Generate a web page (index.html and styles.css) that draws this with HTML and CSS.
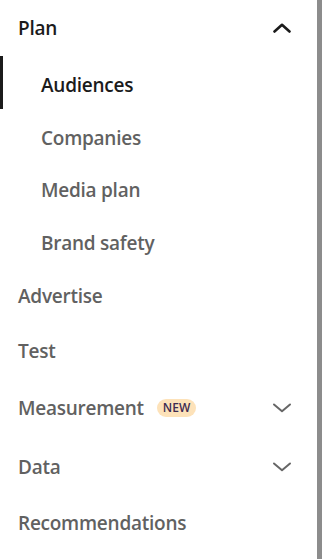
FILE: index.html
```html
<!DOCTYPE html>
<html lang="en">
<head>
  <meta charset="UTF-8" />
  <meta name="viewport" content="width=device-width, initial-scale=1.0" />
  <title>Navigation</title>
  <link rel="stylesheet" href="styles.css">
</head>
<body>
  <nav class="side-nav">
    <div class="nav-group">
      <div class="nav-item nav-parent open">
        <span class="nav-label">Plan</span>
        <svg class="chevron" width="20" height="10" viewBox="0 0 20 10">
          <path d="M2.5 8.5 L10 1.8 L17.5 8.5" />
        </svg>
      </div>
      <div class="sub-item active">Audiences</div>
      <div class="sub-item">Companies</div>
      <div class="sub-item">Media plan</div>
      <div class="sub-item">Brand safety</div>
    </div>

    <div class="nav-item">
      <span class="nav-label">Advertise</span>
    </div>
    <div class="nav-item">
      <span class="nav-label">Test</span>
    </div>
    <div class="nav-item nav-parent">
      <span class="nav-label">Measurement <span class="badge-new">NEW</span></span>
      <svg class="chevron" width="20" height="10" viewBox="0 0 20 10">
        <path d="M2 1.5 L10 8.2 L18 1.5" />
      </svg>
    </div>
    <div class="nav-item nav-parent">
      <span class="nav-label">Data</span>
      <svg class="chevron" width="20" height="10" viewBox="0 0 20 10">
        <path d="M2 1.5 L10 8.2 L18 1.5" />
      </svg>
    </div>
    <div class="nav-item">
      <span class="nav-label">Recommendations</span>
    </div>
  </nav>
</body>
</html>
```

FILE: styles.css
```css
body {
  margin: 0;
  font-family: "Open Sans", Arial, sans-serif;
  background-color: #fff;
  height: 100vh;
  overflow: hidden;
}

.side-nav {
  width: 317px;
  height: 100vh;
  border-right: 5px solid #8c8c8c;
  display: flex;
  flex-direction: column;
}

.nav-item {
  display: flex;
  align-items: center;
  justify-content: space-between;
  box-sizing: border-box;
  height: 55px;
  padding: 4px 25px 0 18px;
  font-size: 19px;
  font-weight: 600;
  letter-spacing: -0.25px;
  color: #616161;
}

.nav-parent {
  height: 58.5px;
}

.nav-parent.open {
  height: 56px;
  padding-top: 0;
  color: #1b1b1b;
}

.nav-label {
  display: flex;
  align-items: center;
  gap: 13px;
}

.chevron path {
  fill: none;
  stroke: #666;
  stroke-width: 2;
  stroke-linecap: round;
  stroke-linejoin: round;
}

.open .chevron path {
  stroke: #1b1b1b;
  stroke-width: 2.6;
}

.sub-item {
  height: 52.7px;
  display: flex;
  align-items: center;
  padding: 5px 0 0 41px;
  font-size: 19px;
  font-weight: 600;
  letter-spacing: -0.25px;
  color: #616161;
  box-sizing: border-box;
}

.sub-item.active {
  color: #1b1b1b;
  border-left: 3px solid #1b1b1b;
  padding-left: 38px;
}

.badge-new {
  background-color: #fde2b9;
  color: #3e2b52;
  font-size: 12px;
  font-weight: 600;
  letter-spacing: 0;
  padding: 0 6px;
  height: 18px;
  line-height: 18px;
  border-radius: 9px;
}
```
